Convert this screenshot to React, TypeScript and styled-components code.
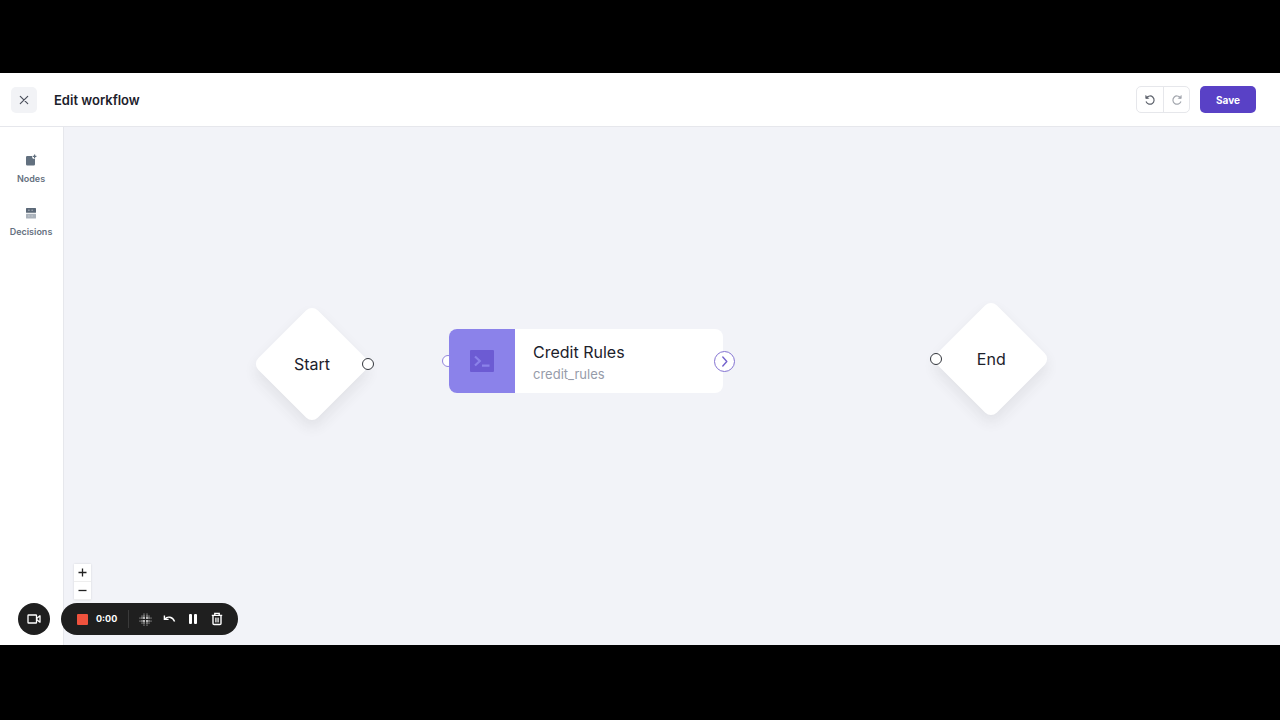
import React from "react";
import styled, { createGlobalStyle } from "styled-components";

const GlobalStyle = createGlobalStyle`
  *, *::before, *::after { box-sizing: border-box; }
  body {
    margin: 0;
    background: #000;
    font-family: Inter, "Liberation Sans", sans-serif;
    color: #1c212b;
  }
  button { font: inherit; color: inherit; border: 0; padding: 0; margin: 0; cursor: pointer; }
  svg { display: block; }
`;

const Letterbox = styled.div`
  display: flex;
  min-height: 100vh;
  padding: 73px 0 75px;
  background: #000;
`;

const Workspace = styled.div`
  position: relative;
  display: flex;
  flex: 1;
  flex-direction: column;
  background: #fff;
`;

const Header = styled.header`
  display: flex;
  align-items: center;
  height: 54px;
  padding: 0 24px 0 11px;
  border-bottom: 1px solid #e6e7ec;
`;

const CloseButton = styled.button`
  display: grid;
  place-items: center;
  width: 26px;
  height: 26px;
  border-radius: 5px;
  background: #f2f3f6;
  && { color: #4b505c; }
`;

const Title = styled.h1`
  flex: 1;
  margin: 0 0 0 17px;
  font-size: 13px;
  line-height: 18px;
  font-weight: 600;
`;

const History = styled.div`
  display: flex;
  margin-right: 10px;
  border: 1px solid #e6e7eb;
  border-radius: 5px;
`;

const HistoryButton = styled.button<{ $muted?: boolean }>`
  display: grid;
  place-items: center;
  width: 26px;
  height: 25px;
  background: none;
  && { color: ${(p) => (p.$muted ? "#a3a7ae" : "#5d626c")}; }
  & + & { border-left: 1px solid #e6e7eb; }
`;

const SaveButton = styled.button`
  width: 56px;
  height: 27px;
  border-radius: 5px;
  background: #5941c6;
  && { color: #fff; font-size: 10px; font-weight: 700; }
`;

const Body = styled.div`
  display: flex;
  flex: 1;
`;

const Sidebar = styled.nav`
  display: flex;
  flex-direction: column;
  align-items: center;
  gap: 22px;
  width: 64px;
  padding: 26px 1px 0 0;
  border-right: 1px solid #e6e7ec;
`;

const SideItem = styled.button`
  display: flex;
  flex-direction: column;
  align-items: center;
  gap: 6px;
  background: none;
  && { color: #66717f; font-size: 9px; line-height: 11px; font-weight: 600; }
`;

const Canvas = styled.main`
  position: relative;
  flex: 1;
  overflow: hidden;
  background: #f2f3f8;
`;

const NodeSlot = styled.div<{ $x: number; $y: number }>`
  position: absolute;
  left: ${(p) => p.$x}px;
  top: ${(p) => p.$y}px;
`;

const Diamond = styled.div`
  display: grid;
  place-items: center;
  width: 84px;
  height: 84px;
  border-radius: 8px;
  background: #fff;
  box-shadow: 5px 5px 14px rgba(60, 60, 50, 0.09);
  transform: rotate(45deg);
`;

const DiamondLabel = styled.span`
  font-size: 16px;
  line-height: 20px;
  transform: rotate(-45deg);
`;

const Port = styled.span<{ $side: "left" | "right"; $offset: number; $color?: string }>`
  position: absolute;
  top: calc(50% - 6px);
  ${(p) => p.$side}: ${(p) => p.$offset}px;
  width: 12px;
  height: 12px;
  border: 1px solid ${(p) => p.$color ?? "#33363d"};
  border-radius: 50%;
  background: #fff;
`;

const RuleCard = styled.article`
  position: relative;
  display: flex;
  width: 274px;
  height: 64px;
  overflow: hidden;
  border-radius: 8px;
  background: #fff;
`;

const RuleIcon = styled.div`
  display: grid;
  place-items: center;
  width: 66px;
  background: #8b82ea;
`;

const RuleText = styled.div`
  display: flex;
  flex-direction: column;
  gap: 3px;
  padding: 13px 18px;
`;

const RuleName = styled.span`
  font-size: 16px;
  line-height: 20px;
`;

const RuleKey = styled.span`
  font-size: 13px;
  line-height: 18px;
  color: #969ba9;
`;

const NextButton = styled.button`
  position: absolute;
  top: calc(50% - 10px);
  right: -12px;
  display: grid;
  place-items: center;
  width: 21px;
  height: 21px;
  border-radius: 50%;
  background: #fff;
  && { border: 1px solid #8473d2; color: #7462cd; }
`;

const ZoomControls = styled.div`
  position: absolute;
  left: 10px;
  bottom: 45px;
  display: flex;
  flex-direction: column;
  box-shadow: 0 0 2px rgba(0, 0, 0, 0.12);
`;

const ZoomButton = styled.button`
  display: grid;
  place-items: center;
  width: 17px;
  height: 18px;
  background: #fff;
  && { border-bottom: 1px solid #eee; color: #222; }
`;

const Recorder = styled.div`
  position: absolute;
  left: 18px;
  bottom: 10px;
  display: flex;
  gap: 11px;
`;

const CameraButton = styled.button`
  display: grid;
  place-items: center;
  width: 32px;
  height: 32px;
  border-radius: 50%;
  background: #1f1f1f;
  && { color: #fff; }
`;

const RecorderBar = styled.div`
  display: flex;
  align-items: center;
  width: 177px;
  height: 32px;
  padding-left: 16px;
  border-radius: 16px;
  background: #1f1f1f;
  color: #fff;
`;

const StopButton = styled.button`
  width: 11px;
  height: 11px;
  border-radius: 1px;
  background: #f0523d;
`;

const Timer = styled.time`
  width: 41px;
  margin-right: 4px;
  padding-left: 8px;
  border-right: 1px solid #3a3a3a;
  font-size: 9px;
  line-height: 18px;
  font-weight: 700;
`;

const RecorderButton = styled.button`
  display: grid;
  place-items: center;
  width: 24px;
  height: 24px;
  background: none;
`;

const dots: [number, number, number][] = [
  [5, 1, 0.5], [8, 1, 0.5],
  [3, 3, 0.5], [5, 3, 0.7], [8, 3, 0.7], [10, 3, 0.5],
  [1, 5, 0.5], [3, 5, 0.7], [5, 5, 0.9], [8, 5, 0.9], [10, 5, 0.7], [12, 5, 0.5],
  [1, 8, 0.5], [3, 8, 0.7], [5, 8, 0.9], [8, 8, 0.9], [10, 8, 0.7], [12, 8, 0.5],
  [3, 10, 0.5], [5, 10, 0.7], [8, 10, 0.7], [10, 10, 0.5],
  [5, 12, 0.5], [8, 12, 0.5],
];

const TurnIcon = ({ flip }: { flip?: boolean }) => (
  <svg width="12" height="12" viewBox="0 0 12 12" fill="none" stroke="currentColor" strokeWidth="1.2" strokeLinecap="round" strokeLinejoin="round">
    <g transform={flip ? "translate(12 0) scale(-1 1)" : undefined}>
      <path d="M2.7 3.6A4.1 4.1 0 1 1 2.3 7.9" />
      <path d="M1.8 1.9V4.4H4.3Z" fill="currentColor" strokeWidth=".8" />
    </g>
  </svg>
);

export default function App() {
  return (
    <>
      <GlobalStyle />
      <Letterbox>
        <Workspace>
          <Header>
            <CloseButton aria-label="Close">
              <svg width="10" height="10" viewBox="0 0 10 10" stroke="currentColor" strokeWidth="1.2" strokeLinecap="round">
                <path d="M1.3 1.3 8.7 8.7M8.7 1.3 1.3 8.7" />
              </svg>
            </CloseButton>
            <Title>Edit workflow</Title>
            <History>
              <HistoryButton aria-label="Undo"><TurnIcon /></HistoryButton>
              <HistoryButton aria-label="Redo" $muted><TurnIcon flip /></HistoryButton>
            </History>
            <SaveButton>Save</SaveButton>
          </Header>
          <Body>
            <Sidebar>
              <SideItem>
                <svg width="14" height="14" viewBox="0 0 14 14">
                  <path fill="#62707f" d="M3.2 3H8.2V4.3C8.2 5.2 8.8 5.8 9.7 5.8H11V11.2Q11 12.4 9.8 12.4H3.2Q2 12.4 2 11.2V4.2Q2 3 3.2 3Z" />
                  <path stroke="#62707f" strokeWidth="1.2" d="M10.6 1.6V5.2M8.8 3.4H12.4" />
                </svg>
                Nodes
              </SideItem>
              <SideItem>
                <svg width="14" height="14" viewBox="0 0 14 14">
                  <rect x="2" y="2" width="10" height="4.7" rx=".5" fill="#5b6877" />
                  <rect x="2" y="7.7" width="10" height="4.7" rx=".5" fill="#aab2bb" />
                  <path d="M4.2 4.2H5.6M7.5 4.2H8.8" stroke="#d5d9de" strokeWidth=".8" />
                  <path d="M4.2 10H5.6M7.5 10H8.8" stroke="#d5d9de" strokeWidth=".8" />
                </svg>
                Decisions
              </SideItem>
            </Sidebar>
            <Canvas>
              <NodeSlot $x={206} $y={195}>
                <Diamond><DiamondLabel>Start</DiamondLabel></Diamond>
                <Port $side="right" $offset={-20} />
              </NodeSlot>
              <NodeSlot $x={385} $y={202}>
                <Port $side="left" $offset={-7} $color="#9386dc" />
                <RuleCard>
                  <RuleIcon>
                    <svg width="26" height="24" viewBox="0 0 26 24" fill="none">
                      <rect x="1" y="1" width="24" height="22" rx="1" fill="#6c5bd3" />
                      <path d="M6 7.5 10.8 12 6 16.5" stroke="#8b82ea" strokeWidth="2.2" />
                      <path d="M13 16.7H20.5" stroke="#8b82ea" strokeWidth="2.2" />
                    </svg>
                  </RuleIcon>
                  <RuleText>
                    <RuleName>Credit Rules</RuleName>
                    <RuleKey>credit_rules</RuleKey>
                  </RuleText>
                </RuleCard>
                <NextButton aria-label="Connect next node">
                  <svg width="9" height="11" viewBox="0 0 9 11" fill="none" stroke="currentColor" strokeWidth="1.4" strokeLinecap="round" strokeLinejoin="round">
                    <path d="M2.8 1 6.8 5.5 2.8 10" />
                  </svg>
                </NextButton>
              </NodeSlot>
              <NodeSlot $x={885} $y={190}>
                <Diamond><DiamondLabel>End</DiamondLabel></Diamond>
                <Port $side="left" $offset={-19} />
              </NodeSlot>
              <ZoomControls>
                <ZoomButton aria-label="Zoom in">
                  <svg width="9" height="9" viewBox="0 0 9 9" stroke="currentColor" strokeWidth="1.3"><path d="M4.5 .5V8.5M.5 4.5H8.5" /></svg>
                </ZoomButton>
                <ZoomButton aria-label="Zoom out">
                  <svg width="9" height="9" viewBox="0 0 9 9" stroke="currentColor" strokeWidth="1.3"><path d="M.5 4.5H8.5" /></svg>
                </ZoomButton>
              </ZoomControls>
            </Canvas>
          </Body>
          <Recorder>
            <CameraButton aria-label="Camera">
              <svg width="16" height="12" viewBox="0 0 16 12" fill="none" stroke="currentColor" strokeWidth="1.3" strokeLinejoin="round">
                <rect x="2" y="2" width="8.5" height="8" rx=".6" />
                <path d="M10.8 5.3 14 2.8V9.2L10.8 6.7Z" />
              </svg>
            </CameraButton>
            <RecorderBar>
              <StopButton aria-label="Stop recording" />
              <Timer>0:00</Timer>
              <RecorderButton aria-label="Blur">
                <svg width="13" height="13" viewBox="0 0 13 13" fill="currentColor">
                  {dots.map(([x, y, r]) => <circle key={`${x}-${y}`} cx={x} cy={y} r={r} />)}
                </svg>
              </RecorderButton>
              <RecorderButton aria-label="Restart">
                <svg width="13" height="12" viewBox="0 0 13 12" fill="none" stroke="currentColor" strokeWidth="1.4">
                  <path d="M1.4 2.4V6.4H5.6M1.7 6.2C4.6 2.8 9.6 3.6 11.6 8.6" />
                </svg>
              </RecorderButton>
              <RecorderButton aria-label="Pause">
                <svg width="10" height="10" viewBox="0 0 10 10" fill="currentColor">
                  <rect x="1" y="0" width="3" height="10" rx="1" /><rect x="6" y="0" width="3" height="10" rx="1" />
                </svg>
              </RecorderButton>
              <RecorderButton aria-label="Delete">
                <svg width="12" height="14" viewBox="0 0 12 14" fill="none" stroke="currentColor" strokeWidth="1.4">
                  <path d="M.8 3.4H11.2M3.8 3.2V1.4H8.2V3.2M2 3.6V11.4Q2 12.5 3.1 12.5H8.9Q10 12.5 10 11.4V3.6" />
                  <path d="M4.7 5.6V10.4M7.3 5.6V10.4M6 5.6V10.4" strokeWidth=".9" />
                </svg>
              </RecorderButton>
            </RecorderBar>
          </Recorder>
        </Workspace>
      </Letterbox>
    </>
  );
}
